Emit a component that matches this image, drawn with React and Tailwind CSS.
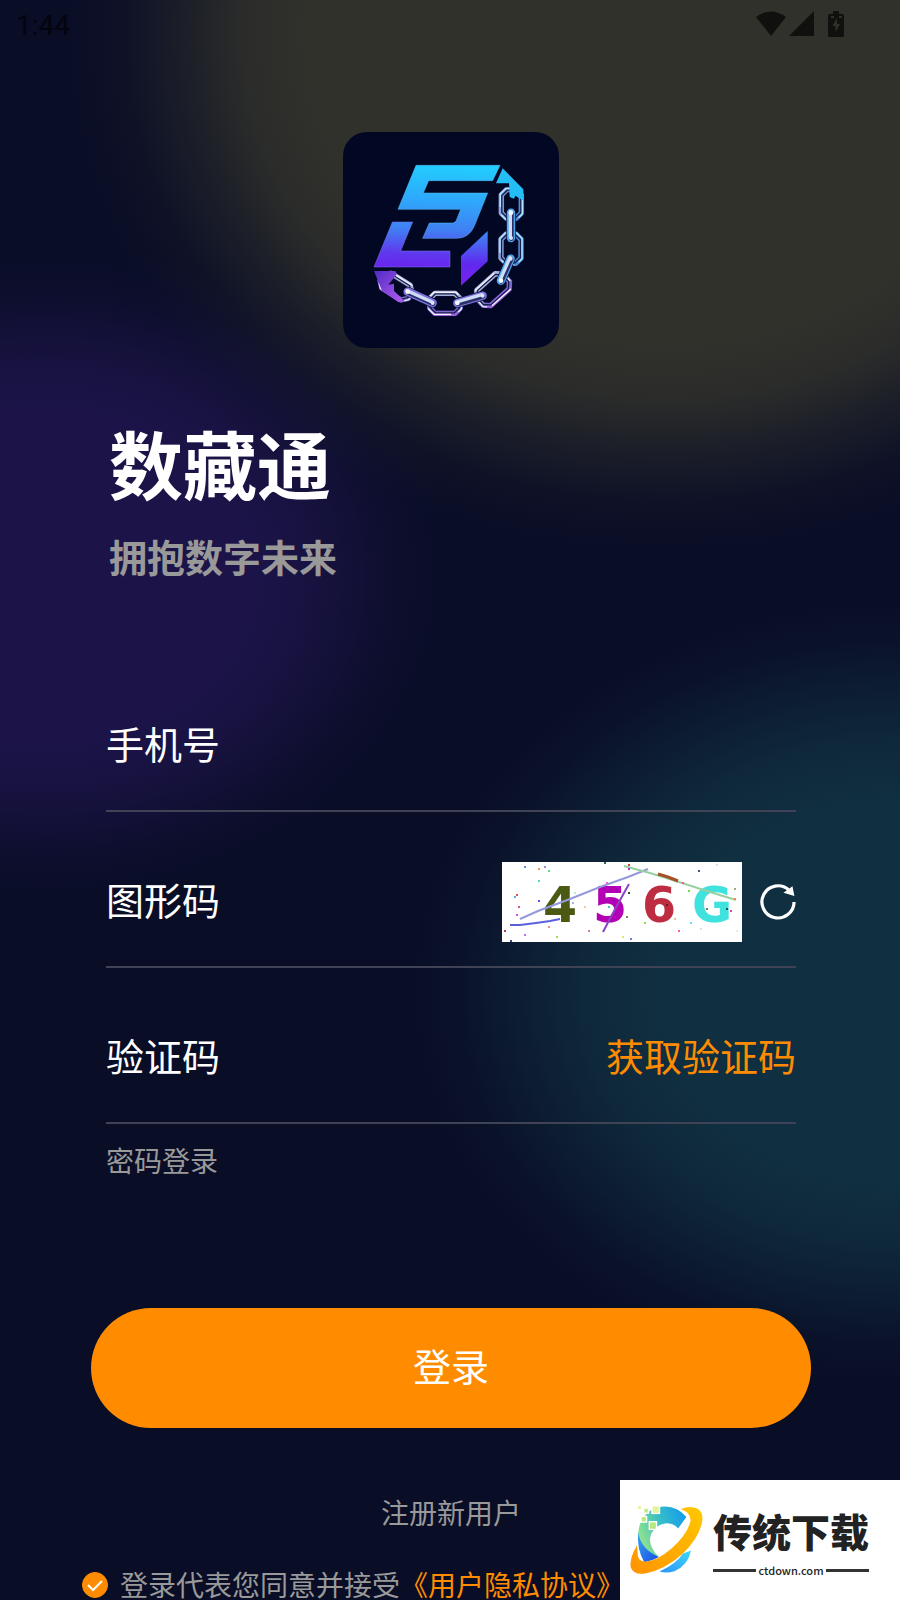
import React, { useState } from "react";

const LINKS = [
  { cx: 168, cy: 470, w: 116, h: 68, r: 32 },
  { cx: 315, cy: 520, w: 108, h: 76, r: 0 },
  { cx: 459, cy: 479, w: 122, h: 78, r: -42 },
  { cx: 513, cy: 356, w: 104, h: 76, r: 90 },
  { cx: 514, cy: 222, w: 102, h: 76, r: 90 },
];

const PINS = [
  [203, 485, 278, 519],
  [352, 519, 428, 497],
  [483, 452, 512, 386],
  [513, 248, 513, 324],
];

const DOTS = [
  [22, 4, "#5b8fe0"], [36, 6, "#f09a55"], [42, 4, "#9a8be0"], [46, 8, "#55e08a"],
  [102, 0, "#2f6b50"], [126, 2, "#d84040"], [126, 6, "#b030d0"], [196, 8, "#405880"],
  [214, 2, "#e6e0cc"], [36, 18, "#50d8cc"], [14, 32, "#e05050"], [12, 34, "#50b0f0"],
  [36, 38, "#5a50f0"], [16, 44, "#e050a0"], [14, 52, "#e050e0"], [72, 30, "#aef0c0"],
  [70, 40, "#b5b0dd"], [82, 44, "#f8c8a0"], [104, 20, "#ee60e0"], [106, 44, "#30ccc0"],
  [126, 30, "#404030"], [124, 54, "#8a8550"], [142, 60, "#8be040"], [180, 20, "#f06080"],
  [186, 28, "#70e040"], [232, 26, "#a0b080"], [232, 36, "#f08850"], [224, 46, "#205050"],
  [228, 48, "#e040a0"], [204, 46, "#808060"], [164, 42, "#602028"], [172, 56, "#d8c898"],
  [188, 60, "#70d8ff"], [198, 66, "#e0ddf0"], [234, 68, "#e2eee2"], [176, 68, "#ff6078"],
  [2, 68, "#b04050"], [22, 72, "#bd70ff"], [46, 64, "#e09878"], [54, 74, "#a0dd50"],
  [86, 68, "#d08098"], [120, 74, "#e6e078"], [128, 76, "#8070ee"], [8, 78, "#304878"],
];

function ringPath(w, h) {
  const x = w / 2 - 8;
  const y = h / 2 - 8;
  const c = 16;
  return `M${-x + c} ${-y}H${x - c}L${x} ${-y + c}V${y - c}L${x - c} ${y}H${-x + c}L${-x} ${y - c}V${-y + c}Z`;
}

function AppLogo() {
  return (
    <svg viewBox="9 6 648 648" className="size-[216px] rounded-3xl bg-[#020723]" aria-hidden="true">
      <defs>
        <linearGradient id="mark" gradientUnits="userSpaceOnUse" x1="300" y1="106" x2="290" y2="420">
          <stop offset="0" stopColor="#22cdff" />
          <stop offset="0.35" stopColor="#2fa6fb" />
          <stop offset="0.62" stopColor="#417ff3" />
          <stop offset="0.85" stopColor="#6038ed" />
          <stop offset="1" stopColor="#6a22ee" />
        </linearGradient>
        <linearGradient id="slash" x1="0" y1="0" x2="0" y2="1">
          <stop offset="0" stopColor="#398df4" />
          <stop offset="0.6" stopColor="#6029ee" />
          <stop offset="1" stopColor="#7a20ef" />
        </linearGradient>
        <linearGradient id="steel" gradientUnits="userSpaceOnUse" x1="0" y1="-50" x2="0" y2="50">
          <stop offset="0" stopColor="#c8cbe6" />
          <stop offset="0.45" stopColor="#8d9cd0" />
          <stop offset="0.7" stopColor="#7567d0" />
          <stop offset="1" stopColor="#c95ce8" />
        </linearGradient>
        <linearGradient id="ice" gradientUnits="userSpaceOnUse" x1="0" y1="-50" x2="0" y2="50">
          <stop offset="0" stopColor="#39a8f0" />
          <stop offset="0.5" stopColor="#5c80c8" />
          <stop offset="1" stopColor="#a4b4e2" />
        </linearGradient>
        <linearGradient id="tail" x1="0" y1="0" x2="1" y2="1">
          <stop offset="0" stopColor="#4f2ac4" />
          <stop offset="1" stopColor="#b45cf0" />
        </linearGradient>
      </defs>
      <path fill="url(#mark)" stroke="#55bdf5" strokeWidth="1.5" d="M228 106H480L458 152H266L250 189H443L404 286Q388 325 350 325H248L268 279H338Q346 279 349 271L362 238H174Z" />
      <path fill="url(#mark)" stroke="#7a76f0" strokeWidth="1.5" d="M157 276H218L182 363H330V411H102Z" />
      <path fill="url(#slash)" d="M363 378L443 303V394L363 467Z" />
      {LINKS.map((l, i) => (
        <g key={i} transform={`translate(${l.cx} ${l.cy}) rotate(${l.r})`} fill="none" strokeLinejoin="round">
          <path d={ringPath(l.w, l.h)} stroke="#0b0e34" strokeWidth="20" />
          <path d={ringPath(l.w, l.h)} stroke={i > 2 ? "url(#ice)" : "url(#steel)"} strokeWidth="16" />
          <path d={ringPath(l.w - 3, l.h - 3)} stroke="#191d4c" strokeWidth="4" />
          <path d={ringPath(l.w + 6, l.h + 6)} stroke={i > 2 ? "#b4e6ff" : "#f2f3ff"} strokeWidth="4" strokeDasharray="76 16 44 24" />
        </g>
      ))}
      {PINS.map(([x1, y1, x2, y2], i) => (
        <g key={i} strokeLinecap="round">
          <line x1={x1} y1={y1} x2={x2} y2={y2} stroke="#0b0e34" strokeWidth="29" />
          <line x1={x1} y1={y1} x2={x2} y2={y2} stroke={i < 2 ? "#7f74dd" : "#4fa6ea"} strokeWidth="25" />
          <line x1={x1 + 1} y1={y1 + 2} x2={x2 + 1} y2={y2 + 2} stroke="#2a3068" strokeWidth="14" />
          <line x1={x1 - 2} y1={y1 - 3} x2={x2 - 2} y2={y2 - 3} stroke="#cfdcf8" strokeWidth="10" />
          <circle cx={x1} cy={y1} r="7" fill="#f6f8ff" />
          <circle cx={x2} cy={y2} r="6" fill="#dbe4ff" />
        </g>
      ))}
      <path fill="#24bdf5" d="M468 160L488 115L550 178V212L526 197L522 206L509 201L507 160Z" />
      <path fill="url(#tail)" d="M102 423H166L171 432L145 464L162 461V482L189 510L176 517L126 482Z" />
    </svg>
  );
}

function StatusBar() {
  return (
    <header className="flex h-12 items-center justify-between pl-4 pr-14 text-black/65">
      <span className="pt-1 font-['Roboto',sans-serif] text-[28px] leading-8">1:44</span>
      <div className="flex items-center gap-[3px]">
        <svg viewBox="0 0 30 26" className="h-[26px] w-[30px]" fill="currentColor" aria-hidden="true">
          <path d="M0 6Q15 -5 30 6L15 25Z" />
        </svg>
        <svg viewBox="0 0 25 26" className="h-[26px] w-[25px]" fill="currentColor" aria-hidden="true">
          <path d="M25 0V25H0Z" />
        </svg>
        <svg viewBox="0 0 16 26" className="ml-[11px] h-[26px] w-4" fill="currentColor" aria-hidden="true">
          <path fillRule="evenodd" d="M5 0H11V3H14.500Q16 3 16 4.500V24.500Q16 26 14.500 26H1.500Q0 26 0 24.500V4.500Q0 3 1.500 3H5ZM9 7L4.500 15H7.500V21L12 13H9ZM3 5V7H6V5ZM11 5V7H14V5Z" />
        </svg>
      </div>
    </header>
  );
}

function Captcha() {
  return (
    <svg viewBox="0 0 240 80" className="h-20 w-60 shrink-0 bg-white" role="img" aria-label="图形码">
      <g className="font-['DejaVu_Sans',sans-serif] text-[49px] font-bold">
        <text x="41" y="60" fill="#4a5a12">4</text>
        <text x="91" y="60" fill="#b400b4">5</text>
        <text x="140" y="60" fill="#bd2c40">6</text>
        <text x="190" y="60" fill="#3fe2dd">G</text>
      </g>
      <g fill="none" strokeWidth="2">
        <path d="M8 63H18L34 61L48 59L58 57" stroke="#5a60dc" />
        <path d="M18 57L36 49L68 37L98 25L126 15L146 7" stroke="#9499dc" />
        <path d="M101 70L112 49L127 22" stroke="#8a45c0" />
        <path d="M122 4L148 11L180 21L208 30L234 38" stroke="#98d0a0" />
        <path d="M156 12L166 15L176 19" stroke="#a85028" strokeWidth="3" />
      </g>
      {DOTS.map(([x, y, fill], i) => (
        <rect key={i} x={x} y={y} width="2" height="2" fill={fill} />
      ))}
    </svg>
  );
}

function Field({ id, label, value, onChange, children }) {
  return (
    <div className="flex h-[156px] items-center border-b-2 border-[#404255] pb-6 pt-[50px]">
      <label htmlFor={id} className="shrink-0 pb-1.5 text-[38px] leading-12 text-white">{label}</label>
      <input
        id={id}
        value={value}
        onChange={(e) => onChange(e.target.value)}
        className="mx-4 h-16 min-w-0 flex-1 bg-transparent text-[32px] text-white outline-none"
      />
      {children}
    </div>
  );
}

function SiteBadge() {
  return (
    <aside className="absolute bottom-0 right-0 flex h-[120px] w-[280px] items-center gap-2.5 bg-white pl-2.5">
      <svg viewBox="45 90 220 210" className="h-[70px] w-[73px] shrink-0" aria-hidden="true">
        <defs>
          <linearGradient id="ring" x1="1" y1="0" x2="0" y2="1">
            <stop offset="0" stopColor="#ffc800" />
            <stop offset="1" stopColor="#ff9200" />
          </linearGradient>
          <linearGradient id="arc" x1="0" y1="0.6" x2="1" y2="0.2">
            <stop offset="0" stopColor="#94e48a" />
            <stop offset="0.5" stopColor="#38bfc6" />
            <stop offset="1" stopColor="#129bee" />
          </linearGradient>
          <linearGradient id="deep" x1="0" y1="0" x2="1" y2="1">
            <stop offset="0" stopColor="#36a7ef" />
            <stop offset="1" stopColor="#184be5" />
          </linearGradient>
          <linearGradient id="foot" x1="0" y1="1" x2="1" y2="0">
            <stop offset="0" stopColor="#2e92f7" />
            <stop offset="1" stopColor="#3ed9fb" />
          </linearGradient>
        </defs>
        <path fill="url(#arc)" d="M215 126Q188 92 146 94Q99 97 78 140Q60 180 80 222Q100 249 132 246Q105 220 105 192Q110 153 151 145Q177 143 190 160Z" />
        <path fill="url(#deep)" d="M70 170Q76 222 132 246Q112 258 88 262Q64 220 70 170Z" />
        <path fill="url(#foot)" d="M229 227Q219 273 179 289Q155 297 134 290Q185 267 205 236Z" />
        <path fill="url(#ring)" d="M198 102Q226 90 249 101Q269 114 261 147Q249 194 203 237Q152 283 91 296Q55 301 47 277Q43 251 66 211L69 245Q74 262 96 260Q129 256 171 220Q216 180 227 140Q231 112 198 102Z" />
        <g stroke="white" strokeWidth="4">
          <rect x="111" y="92" width="23" height="23" fill="#e4f29a" />
          <rect x="86" y="99" width="15" height="15" fill="#bfeb88" />
          <rect x="78" y="124" width="17" height="17" fill="#b9ea80" />
          <rect x="103" y="140" width="22" height="23" fill="#b5e880" />
          <rect x="67" y="91" width="13" height="13" fill="#e9f3a5" />
        </g>
      </svg>
      <div className="flex w-[156px] flex-col pt-1 text-[#222222]">
        <span className="whitespace-nowrap text-[39px] font-black leading-12">传统下载</span>
        <span className="mt-2 flex items-center gap-0.5 text-[11px] font-medium leading-4">
          <span className="h-[3px] flex-1 bg-[#333333]" />
          ctdown.com
          <span className="h-[3px] flex-1 bg-[#333333]" />
        </span>
      </div>
    </aside>
  );
}

export default function App() {
  const [phone, setPhone] = useState("");
  const [imageCode, setImageCode] = useState("");
  const [smsCode, setSmsCode] = useState("");
  const [agreed, setAgreed] = useState(true);

  return (
    <div className="relative min-h-screen bg-[#090d26] bg-[radial-gradient(600px_520px_at_74%_2%,#30312bff_60%,#30312be0_70%,#30312b80_80%,#30312b28_90%,#30312b00_100%),radial-gradient(410px_330px_at_5%_36%,#1c1449ff_48%,#1c1449d0_62%,#1c144978_76%,#1c144928_88%,#1c144900_100%),radial-gradient(500px_400px_at_100%_62%,#102f40ff_48%,#102f40d0_62%,#102f4078_76%,#102f4028_88%,#102f4000_100%)] font-['Noto_Sans_CJK_SC',sans-serif]">
      <StatusBar />
      <main className="pl-0.5">
        <div className="mt-[84px] flex justify-center">
          <AppLogo />
        </div>
        <div className="mt-[68px] px-[107px]">
          <h1 className="text-[74px] font-bold leading-[92px] text-white">数藏通</h1>
          <p className="mt-5 text-[38px] font-bold leading-14 text-[#999999]">拥抱数字未来</p>
        </div>

        <form className="mt-18" onSubmit={(e) => e.preventDefault()}>
          <div className="px-[104px]">
            <Field id="phone" label="手机号" value={phone} onChange={setPhone} />
            <Field id="image-code" label="图形码" value={imageCode} onChange={setImageCode}>
              <Captcha />
              <button type="button" aria-label="刷新" className="ml-[18px] shrink-0">
                <svg viewBox="778 85 112 112" className="size-9" fill="none" stroke="white" strokeWidth="10" aria-hidden="true">
                  <path d="M884 141A50 50 0 1 1 867 103" />
                  <path d="M879 92L885 122L851 112Z" fill="white" stroke="none" />
                </svg>
              </button>
            </Field>
            <Field id="sms-code" label="验证码" value={smsCode} onChange={setSmsCode}>
              <button type="button" className="shrink-0 pb-1.5 text-[38px] leading-12 text-[#ff8c00]">获取验证码</button>
            </Field>
            <a href="#password" className="mt-4 inline-block text-[28px] leading-10 text-[#999999]">密码登录</a>
          </div>

          <div className="mt-32 px-[89px]">
            <button type="submit" className="h-[120px] w-full rounded-full bg-[#ff8c00] pb-2 text-[38px] text-white">
              登录
            </button>
          </div>

          <div className="mt-16 text-center">
            <a href="#register" className="inline-block text-[28px] leading-10 text-[#999999]">注册新用户</a>
          </div>

          <div className="mt-[38px] flex h-[30px] items-center pl-20 text-[28px] leading-[30px] text-[#999999]">
            <span className="relative mr-3 flex size-[26px] shrink-0">
              <input
                id="agree"
                type="checkbox"
                checked={agreed}
                onChange={(e) => setAgreed(e.target.checked)}
                className="peer size-[26px] appearance-none rounded-full border border-[#ff8c00] checked:bg-[#ff8c00]"
              />
              <svg viewBox="0 0 26 26" className="pointer-events-none absolute inset-0 hidden peer-checked:block" fill="none" stroke="white" strokeWidth="2" aria-hidden="true">
                <path d="M6 13L11 18L20 9" />
              </svg>
            </span>
            <label htmlFor="agree" className="pb-0.5">登录代表您同意并接受</label>
            <a href="#privacy" className="pb-0.5 text-[#ff8c00]">《用户隐私协议》</a>
          </div>
        </form>
      </main>
      <SiteBadge />
    </div>
  );
}
